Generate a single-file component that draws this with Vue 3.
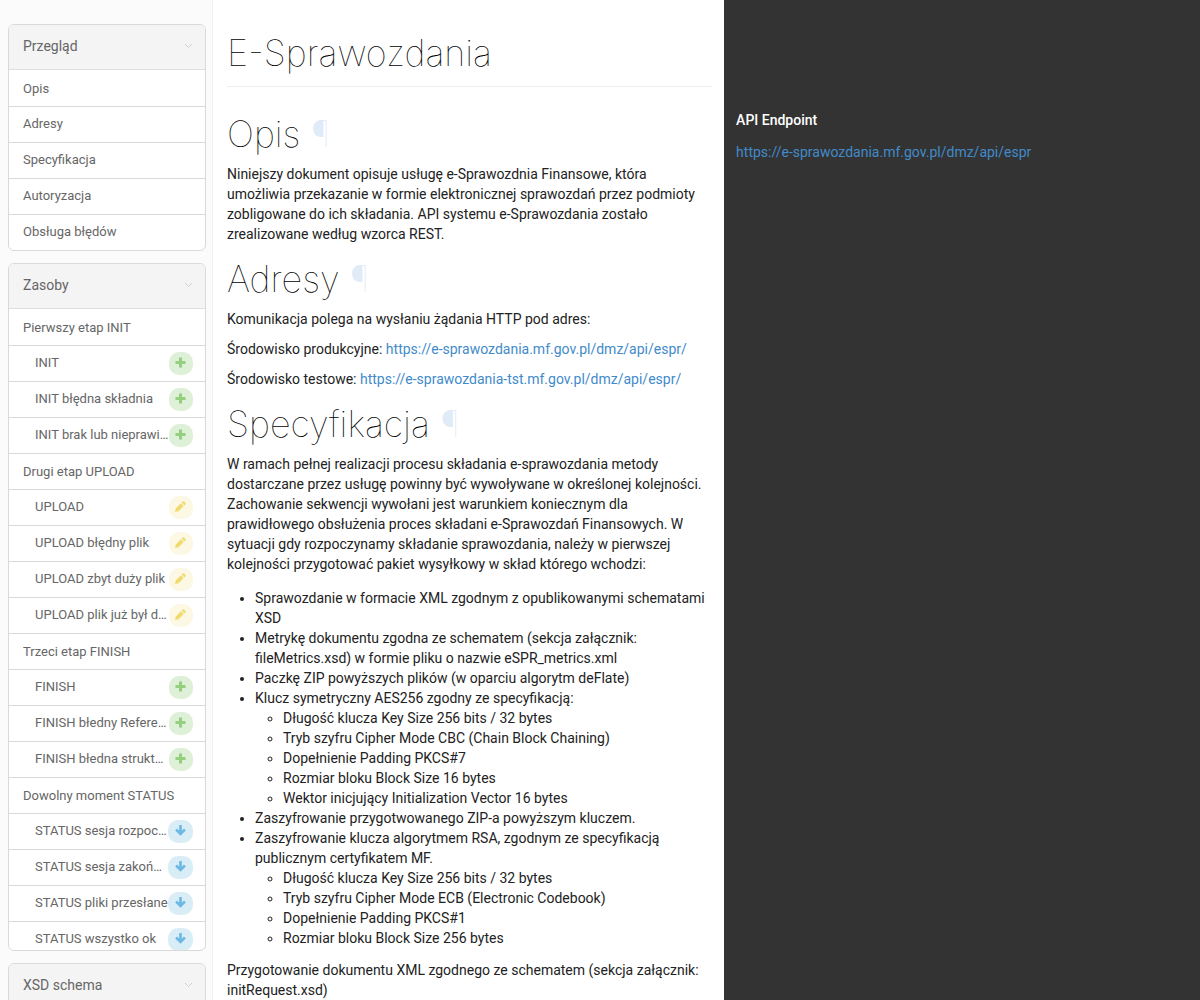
<script setup>
const groups = [
  {
    title: 'Przegląd',
    compact: true,
    items: [
      { label: 'Opis' },
      { label: 'Adresy' },
      { label: 'Specyfikacja' },
      { label: 'Autoryzacja' },
      { label: 'Obsługa błędów' },
    ],
  },
  {
    title: 'Zasoby',
    items: [
      { label: 'Pierwszy etap INIT' },
      { label: 'INIT', method: 'post' },
      { label: 'INIT błędna składnia', method: 'post' },
      { label: 'INIT brak lub nieprawidłowy', method: 'post' },
      { label: 'Drugi etap UPLOAD' },
      { label: 'UPLOAD', method: 'put' },
      { label: 'UPLOAD błędny plik', method: 'put' },
      { label: 'UPLOAD zbyt duży plik', method: 'put' },
      { label: 'UPLOAD plik już był dodany', method: 'put' },
      { label: 'Trzeci etap FINISH' },
      { label: 'FINISH', method: 'post' },
      { label: 'FINISH błedny ReferenceNumber', method: 'post' },
      { label: 'FINISH błedna struktura', method: 'post' },
      { label: 'Dowolny moment STATUS' },
      { label: 'STATUS sesja rozpoczęta', method: 'get' },
      { label: 'STATUS sesja zakończona', method: 'get' },
      { label: 'STATUS pliki przesłane', method: 'get' },
      { label: 'STATUS wszystko ok', method: 'get' },
    ],
  },
  { title: 'XSD schema', items: [] },
]

const icons = {
  post: 'M4 0.500h3V4h3.500v3H7v3.500H4V7H0.500V4H4z',
  put: 'M0 11l0.800-3.600L5.900 2.300l2.800 2.800L3.600 10.200zM6.600 1.600L7.700 0.500q0.700-0.600 1.400 0l1.400 1.400q0.600 0.700 0 1.400L9.400 4.400z',
  get: 'M4.200 0h2.600v5.800l2.200-2.200 1.800 1.800-5.300 5.400L0.200 5.400 2 3.600l2.200 2.200z',
}

const packageParts = [
  { text: 'Sprawozdanie w formacie XML zgodnym z opublikowanymi schematami XSD' },
  { text: 'Metrykę dokumentu zgodna ze schematem (sekcja załącznik: fileMetrics.xsd) w formie pliku o nazwie eSPR_metrics.xml' },
  { text: 'Paczkę ZIP powyższych plików (w oparciu algorytm deFlate)' },
  {
    text: 'Klucz symetryczny AES256 zgodny ze specyfikacją:',
    details: [
      'Długość klucza Key Size 256 bits / 32 bytes',
      'Tryb szyfru Cipher Mode CBC (Chain Block Chaining)',
      'Dopełnienie Padding PKCS#7',
      'Rozmiar bloku Block Size 16 bytes',
      'Wektor inicjujący Initialization Vector 16 bytes',
    ],
  },
  { text: 'Zaszyfrowanie przygotwowanego ZIP-a powyższym kluczem.' },
  {
    text: 'Zaszyfrowanie klucza algorytmem RSA, zgodnym ze specyfikacją publicznym certyfikatem MF.',
    details: [
      'Długość klucza Key Size 256 bits / 32 bytes',
      'Tryb szyfru Cipher Mode ECB (Electronic Codebook)',
      'Dopełnienie Padding PKCS#1',
      'Rozmiar bloku Block Size 256 bytes',
    ],
  },
]
</script>

<template>
  <div class="page">
    <nav class="sidebar">
      <section v-for="group in groups" :key="group.title" class="group" :class="{ compact: group.compact }">
        <button type="button" class="group-head">
          {{ group.title }}
          <svg class="chevron" viewBox="0 0 9 6" aria-hidden="true"><path d="M1 1l3.500 3.500L8 1" /></svg>
        </button>
        <ul class="items">
          <li v-for="item in group.items" :key="item.label" class="item">
            <a href="#" class="item-link" :class="{ nested: item.method }">
              <span class="item-label">{{ item.label }}</span>
              <span v-if="item.method" class="badge" :class="item.method">
                <svg viewBox="0 0 11 11" aria-hidden="true"><path :d="icons[item.method]" /></svg>
              </span>
            </a>
          </li>
        </ul>
      </section>
    </nav>

    <main class="content">
      <header><h1>E-Sprawozdania</h1></header>

      <h2 class="first">Opis <a href="#" class="permalink">¶</a></h2>
      <p>Niniejszy dokument opisuje usługę e-Sprawozdnia Finansowe, która umożliwia przekazanie w formie elektronicznej sprawozdań przez podmioty zobligowane do ich składania. API systemu e-Sprawozdania zostało zrealizowane według wzorca REST.</p>

      <h2>Adresy <a href="#" class="permalink">¶</a></h2>
      <p>Komunikacja polega na wysłaniu żądania HTTP pod adres:</p>
      <p>Środowisko produkcyjne: <a href="#">https://e-sprawozdania.mf.gov.pl/dmz/api/espr/</a></p>
      <p>Środowisko testowe: <a href="#">https://e-sprawozdania-tst.mf.gov.pl/dmz/api/espr/</a></p>

      <h2>Specyfikacja <a href="#" class="permalink">¶</a></h2>
      <p>W ramach pełnej realizacji procesu składania e-sprawozdania metody dostarczane przez usługę powinny być wywoływane w określonej kolejności. Zachowanie sekwencji wywołani jest warunkiem koniecznym dla prawidłowego obsłużenia proces składani e-Sprawozdań Finansowych. W sytuacji gdy rozpoczynamy składanie sprawozdania, należy w pierwszej kolejności przygotować pakiet wysyłkowy w skład którego wchodzi:</p>
      <ul class="parts">
        <li v-for="part in packageParts" :key="part.text">
          {{ part.text }}
          <ul v-if="part.details">
            <li v-for="detail in part.details" :key="detail">{{ detail }}</li>
          </ul>
        </li>
      </ul>
      <p>Przygotowanie dokumentu XML zgodnego ze schematem (sekcja załącznik: initRequest.xsd)</p>
    </main>

    <aside class="endpoint">
      <h3>API Endpoint</h3>
      <a href="#">https://e-sprawozdania.mf.gov.pl/dmz/api/espr</a>
    </aside>
  </div>
</template>

<style>
body {
  margin: 0;
}
</style>

<style scoped>
.page {
  display: flex;
  align-items: stretch;
  min-height: 100vh;
  font: 14px/20px Roboto, sans-serif;
  color: #222;
  background: #fff;
}
a {
  color: #428bca;
  text-decoration: none;
}
ul {
  margin: 0;
}
.sidebar {
  position: sticky;
  top: 0;
  flex: 0 0 213px;
  box-sizing: border-box;
  height: 100vh;
  overflow: hidden;
  padding: 24px 6px 0 8px;
  border-right: 1px solid #f0f0f0;
  background: #fbfbfb;
}
.group {
  margin-bottom: 12px;
  border: 1px solid #d9d9d9;
  border-radius: 6px;
  overflow: hidden;
  background: #fff;
}
.group-head {
  display: flex;
  align-items: center;
  justify-content: space-between;
  width: 100%;
  height: 45px;
  padding: 0 12px 2px 14px;
  border: 0;
  border-bottom: 1px solid #dfdfdf;
  background: #f4f4f4;
  color: #666;
  font: inherit;
  text-align: left;
}
.chevron {
  width: 9px;
  height: 6px;
  fill: none;
  stroke: #d0d0d0;
}
.items {
  max-height: 641px;
  overflow: hidden;
  padding: 0;
  list-style: none;
}
.item + .item {
  border-top: 1px solid #d9d9d9;
}
.item-link {
  display: flex;
  align-items: center;
  box-sizing: border-box;
  height: 35px;
  padding: 0 12px 0 14px;
  color: #666;
  font-size: 13px;
}
.item:first-child .item-link {
  height: 36px;
  padding-top: 2px;
}
.compact .item + .item .item-link {
  padding-bottom: 2px;
}
.item-link.nested {
  padding-bottom: 1px;
  padding-left: 26px;
}
.item-label {
  flex: 1;
  min-width: 0;
  overflow: hidden;
  text-overflow: ellipsis;
  white-space: nowrap;
}
.badge {
  display: flex;
  flex: none;
  align-items: center;
  justify-content: center;
  box-sizing: border-box;
  width: 24px;
  height: 23px;
  padding: 0 1px 2px 0;
  border-radius: 10px;
}
.badge svg {
  width: 11px;
  height: 11px;
}
.post {
  background: #dff0d8;
  fill: #93cf7f;
}
.put {
  background: #fcf8e3;
  fill: #f0db70;
}
.get {
  width: 25px;
  background: #d9edf7;
  fill: #6bb8e2;
}
.content {
  flex: 511 1 0;
  min-width: 0;
  box-sizing: border-box;
  padding: 32px 12px 0 14px;
}
h1,
h2 {
  margin: 17px 0 11px;
  font: 100 36px/37px Inter, sans-serif;
  color: #000;
}
h1 {
  margin: 0;
  padding: 3px 0 14px;
  border-bottom: 1px solid #eee;
}
h2.first {
  margin-top: 29px;
}
.permalink {
  color: #dfebf7;
}
p {
  margin: 0 0 10px;
}
.parts {
  margin: 14px 0 12px;
}
.parts,
.parts ul {
  padding-left: 28px;
}
.endpoint {
  flex: 476 1 0;
  min-width: 0;
  box-sizing: border-box;
  padding: 110px 12px 0;
  background: #333;
}
h3 {
  margin: 0 0 12px;
  font-size: 14px;
  font-weight: 500;
  line-height: 20px;
  color: #fff;
}
</style>
